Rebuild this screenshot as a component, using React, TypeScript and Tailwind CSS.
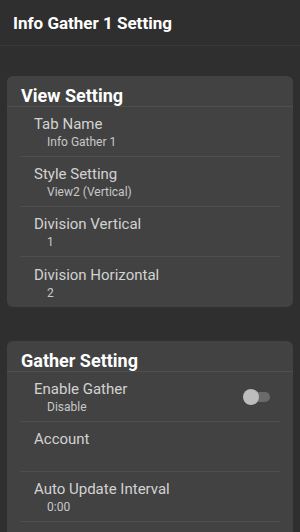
type Item = { id: string; title: string; value?: string; toggle?: boolean };

const viewItems: Item[] = [
  { id: "tab", title: "Tab Name", value: "Info Gather 1" },
  { id: "style", title: "Style Setting", value: "View2 (Vertical)" },
  { id: "divv", title: "Division Vertical", value: "1" },
  { id: "divh", title: "Division Horizontal", value: "2" },
];

const gatherItems: Item[] = [
  { id: "enable", title: "Enable Gather", value: "Disable", toggle: true },
  { id: "account", title: "Account" },
  { id: "interval", title: "Auto Update Interval", value: "0:00" },
  { id: "more", title: "" },
];

function Toggle() {
  return (
    <div className="relative w-[27px] h-[16px] mr-[10px]">
      <div className="absolute left-[3px] top-[3px] w-[24px] h-[10px] rounded-full bg-[#6a6a6a]" />
      <div className="absolute left-0 top-0 w-[16px] h-[16px] rounded-full bg-[#bdbdbd]" />
    </div>
  );
}

function Row({ item, last }: { item: Item; last: boolean }) {
  return (
    <div className="px-[13px]">
      <div
        className={`flex items-center h-[50px] ${
          last ? "" : "border-b border-[#4e4e4e]"
        }`}
      >
        <div className="flex-1 pl-[14px] pt-[2px]">
          <p className="text-[15px] leading-[19px] h-[19px] text-[#d2d2d2]">{item.title}</p>
          <p className="text-[12px] leading-[16px] text-[#c8c8c8] pl-[13px] h-[16px]">
            {item.value}
          </p>
        </div>
        {item.toggle && <Toggle />}
      </div>
    </div>
  );
}

function Card({ title, items }: { title: string; items: Item[] }) {
  return (
    <div className="mx-[7px] rounded-[6px] bg-[#424242] overflow-hidden">
      <div className="pt-[10px] px-[14px] border-b border-[#4e4e4e]">
        <h2 className="text-[18px] leading-[20px] font-bold text-white">{title}</h2>
      </div>
      {items.map((it, i) => (
        <Row key={it.id} item={it} last={i === items.length - 1} />
      ))}
    </div>
  );
}

export default function App() {
  return (
    <div
      className="w-[300px] h-[532px] overflow-hidden bg-[#2f2f2f]"
      style={{ fontFamily: "Roboto, 'Noto Sans', sans-serif" }}
    >
      <header className="h-[46px] flex items-center px-[13px] border-b border-[#393939]">
        <h1 className="text-[17px] font-bold text-white pt-[2px]">Info Gather 1 Setting</h1>
      </header>
      <div className="pt-[30px] flex flex-col gap-[34px]">
        <Card title="View Setting" items={viewItems} />
        <Card title="Gather Setting" items={gatherItems} />
      </div>
    </div>
  );
}
